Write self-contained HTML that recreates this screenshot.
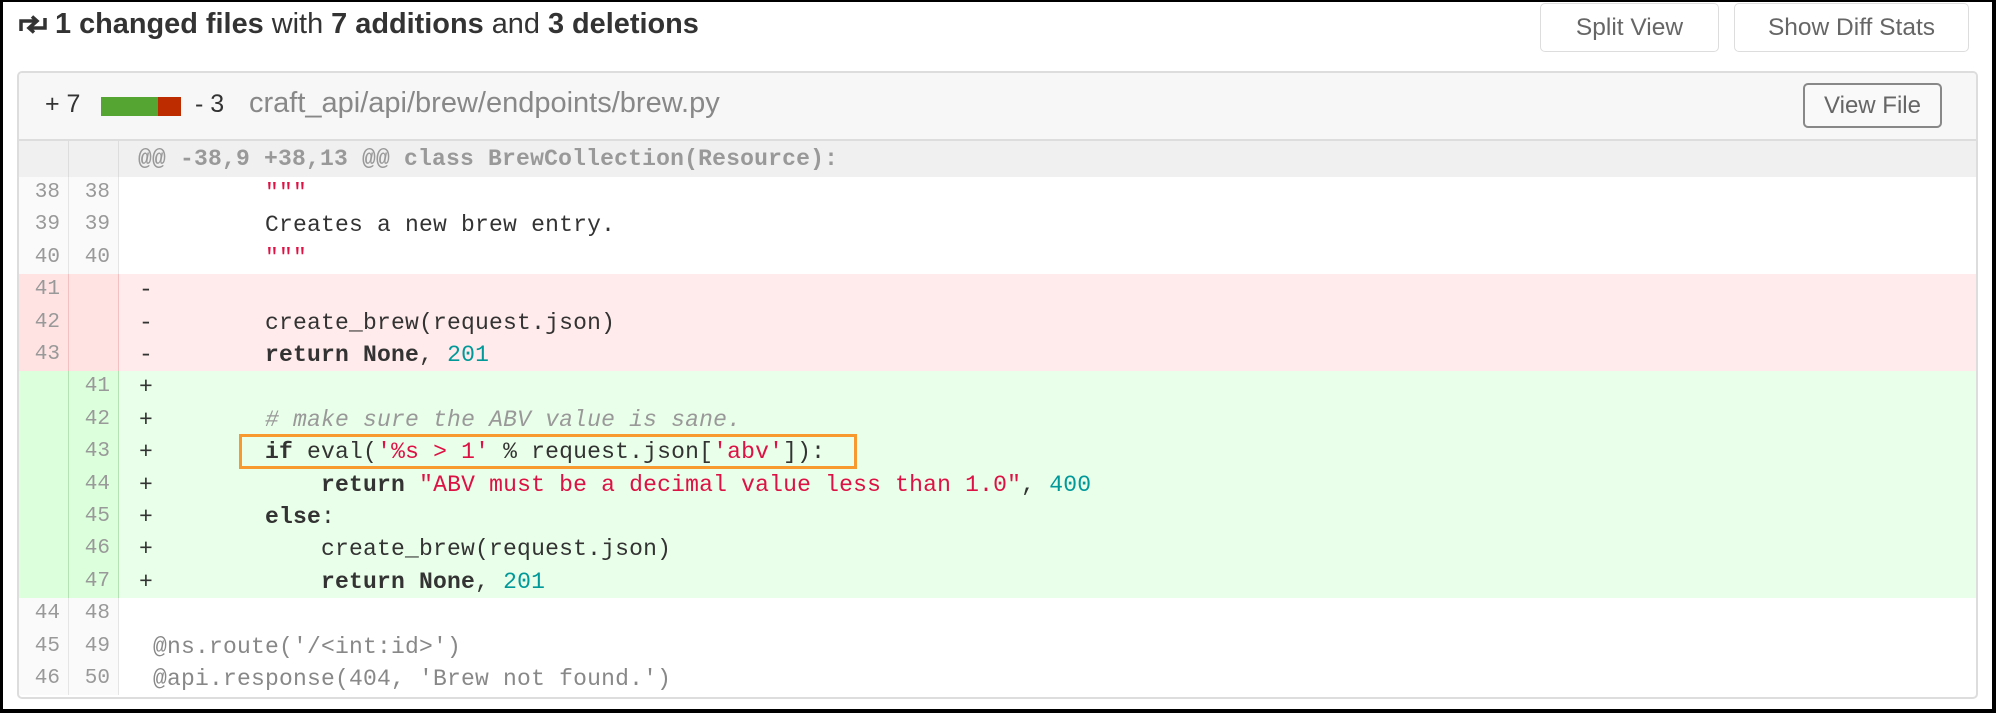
<!DOCTYPE html>
<html><head><meta charset="utf-8"><style>
*{margin:0;padding:0;box-sizing:border-box}
html,body{width:1996px;height:713px;overflow:hidden;background:#000}
#pg{position:absolute;left:3px;top:2px;width:1989px;height:707px;background:#fff;font-family:"Liberation Sans",sans-serif}
.ttl{position:absolute;left:52px;top:6px;font-size:28.9px;color:#333;white-space:nowrap}
.ttl b{font-weight:bold}
.btn{position:absolute;top:1px;height:49px;border:1px solid #ddd;border-radius:5px;background:#fff;color:#666;font-size:24.5px;text-align:center;line-height:47px}
.box{position:absolute;left:14px;top:69px;width:1961px;height:628px;border:2px solid #ddd;border-radius:5px;overflow:hidden}
.hdr{position:absolute;left:0;top:0;width:100%;height:68px;background:#f7f7f7;border-bottom:2px solid #ddd}
.row{position:absolute;left:0;width:100%;height:32.4px;font-family:"Liberation Mono",monospace;font-size:23px;letter-spacing:0.2px;line-height:32.4px;white-space:pre}
.g1,.g2{position:absolute;top:0;height:100%;text-align:right;color:#999;font-size:21px;letter-spacing:0;padding-right:8px}
.g1{left:0;width:50px;border-right:1px solid #e5e5e5}
.g2{left:50px;width:50px;border-right:1px solid #e5e5e5}
.c{position:absolute;left:120px;top:0;color:#333}
.del{background:#ffebeb}.del .g1,.del .g2{background:#ffe3e3;border-color:#f1c0c0}
.add{background:#eaffea}.add .g1,.add .g2{background:#dcffdc;border-color:#b4e2b4}
.ctx .g1,.ctx .g2{background:#fafafa}
.s{color:#d14}.n{color:#099}.k{font-weight:bold}.cm{color:#999;font-style:italic}
</style></head><body><div id="pg">
<svg style="position:absolute;left:15px;top:13px" width="30" height="19" viewBox="0 0 30 19"><path d="M3 16V6h15M14 1.5l5 4.5-5 4.5" fill="none" stroke="#333" stroke-width="3.5"/><path d="M27 3v10H12M16 17.5l-5-4.5 5-4.5" fill="none" stroke="#333" stroke-width="3.5"/></svg>
<div class="ttl"><b>1 changed files</b> with <b>7 additions</b> and <b>3 deletions</b></div>
<div class="btn" style="left:1537px;width:179px">Split View</div>
<div class="btn" style="left:1731px;width:235px">Show Diff Stats</div>
<div class="box">
<div class="hdr">
<div style="position:absolute;left:26px;top:17px;font-size:25px;color:#333">+ 7</div>
<div style="position:absolute;left:82px;top:24px;width:57px;height:19px;background:#55a532"></div>
<div style="position:absolute;left:139px;top:24px;width:23px;height:19px;background:#bd2c00"></div>
<div style="position:absolute;left:176px;top:17px;font-size:25px;color:#333">- 3</div>
<div style="position:absolute;left:230px;top:14px;font-size:29px;color:#888">craft_api/api/brew/endpoints/brew.py</div>
<div style="position:absolute;left:1784px;top:10px;width:139px;height:45px;border:2px solid #888;border-radius:5px;background:#f9f9f9;color:#666;font-size:24px;text-align:center;line-height:41px">View File</div>
</div>
<div class="row" style="top:68px;height:36px;background:#f0f0f0;line-height:36px"><div class="g1" style="border-color:#ddd"></div><div class="g2" style="border-color:#ddd"></div><div class="c" style="left:119px;color:#999;font-weight:bold">@@ -38,9 +38,13 @@ class BrewCollection(Resource):</div></div>
<div class="row ctx" style="top:104px"><div class="g1">38</div><div class="g2">38</div><div class="c">         <span class="s">"""</span></div></div>
<div class="row ctx" style="top:136.4px"><div class="g1">39</div><div class="g2">39</div><div class="c">         Creates a new brew entry.</div></div>
<div class="row ctx" style="top:168.8px"><div class="g1">40</div><div class="g2">40</div><div class="c">         <span class="s">"""</span></div></div>
<div class="row del" style="top:201.2px"><div class="g1">41</div><div class="g2"></div><div class="c">-</div></div>
<div class="row del" style="top:233.6px"><div class="g1">42</div><div class="g2"></div><div class="c">-        create_brew(request.json)</div></div>
<div class="row del" style="top:266px"><div class="g1">43</div><div class="g2"></div><div class="c">-        <span class="k">return None</span>, <span class="n">201</span></div></div>
<div class="row add" style="top:298.4px"><div class="g1"></div><div class="g2">41</div><div class="c">+</div></div>
<div class="row add" style="top:330.8px"><div class="g1"></div><div class="g2">42</div><div class="c">+        <span class="cm"># make sure the ABV value is sane.</span></div></div>
<div class="row add" style="top:363.2px"><div class="g1"></div><div class="g2">43</div><div class="c">+        <span class="k">if</span> eval(<span class="s">'%s &gt; 1'</span> % request.json[<span class="s">'abv'</span>]):</div></div>
<div class="row add" style="top:395.6px"><div class="g1"></div><div class="g2">44</div><div class="c">+            <span class="k">return</span> <span class="s">"ABV must be a decimal value less than 1.0"</span>, <span class="n">400</span></div></div>
<div class="row add" style="top:428px"><div class="g1"></div><div class="g2">45</div><div class="c">+        <span class="k">else</span>:</div></div>
<div class="row add" style="top:460.4px"><div class="g1"></div><div class="g2">46</div><div class="c">+            create_brew(request.json)</div></div>
<div class="row add" style="top:492.8px"><div class="g1"></div><div class="g2">47</div><div class="c">+            <span class="k">return None</span>, <span class="n">201</span></div></div>
<div class="row ctx" style="top:525.2px"><div class="g1">44</div><div class="g2">48</div><div class="c"></div></div>
<div class="row ctx" style="top:557.6px"><div class="g1">45</div><div class="g2">49</div><div class="c" style="color:#888"> @ns.route('/&lt;int:id&gt;')</div></div>
<div class="row ctx" style="top:590px"><div class="g1">46</div><div class="g2">50</div><div class="c" style="color:#888"> @api.response(404, 'Brew not found.')</div></div>
</div>
<div style="position:absolute;left:236px;top:432px;width:618px;height:35px;border:3px solid #f7992f"></div>
</div></body></html>
